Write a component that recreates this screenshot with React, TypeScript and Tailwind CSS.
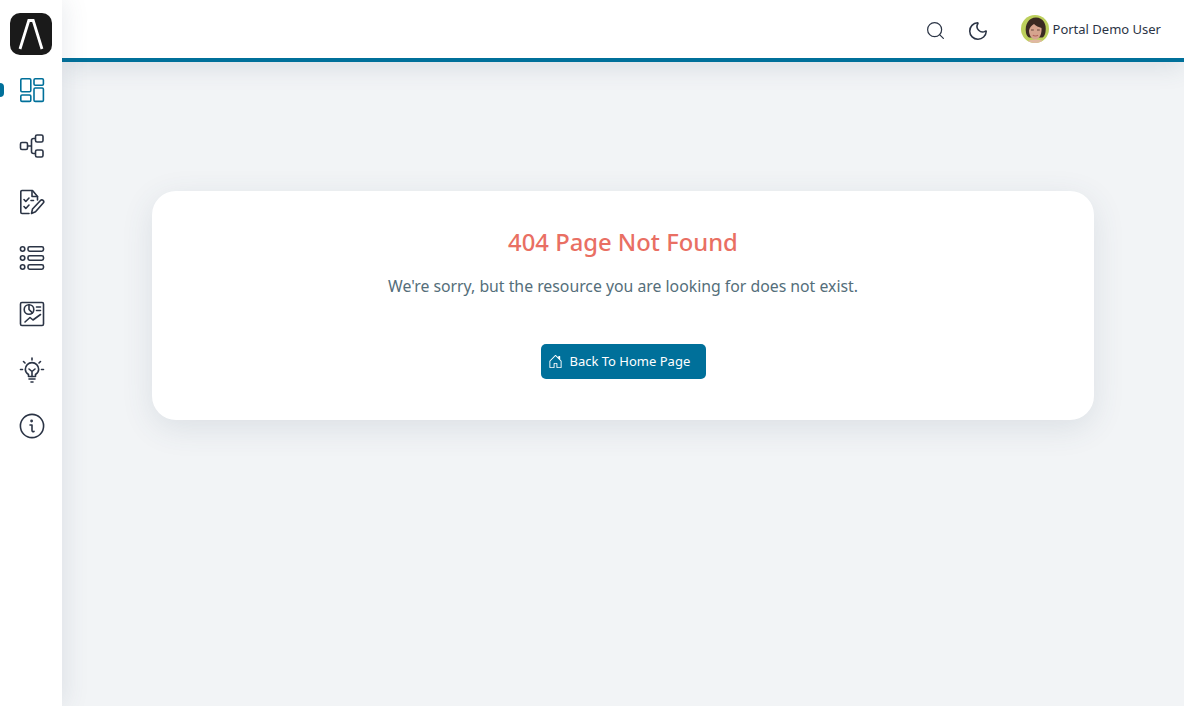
import { Search, Moon } from "lucide-react";
import { BsHouseDoor } from "react-icons/bs";

const ink = "#2b3445";

// sidebar icons, all on a 26 box
function DashIcon() {
  return (
    <svg width="26" height="26" viewBox="0 0 26 26" fill="none" stroke="#00709a" strokeWidth="1.6" strokeLinejoin="round">
      <rect x="1.8" y="1.8" width="10" height="13" rx="1.2" />
      <rect x="15" y="1.8" width="9.4" height="6.4" rx="1.2" />
      <rect x="1.8" y="18" width="10" height="6.4" rx="1.2" />
      <rect x="15" y="11" width="9.4" height="13.4" rx="1.2" />
    </svg>
  );
}

function FlowIcon() {
  return (
    <svg width="26" height="26" viewBox="0 0 26 26" fill="none" stroke={ink} strokeWidth="1.6" strokeLinejoin="round">
      <rect x="1.5" y="9.5" width="7" height="7" rx="1.4" />
      <rect x="16.5" y="2" width="7.5" height="7" rx="1.6" />
      <rect x="16.5" y="17" width="7.5" height="7" rx="1.6" />
      <path d="M8.5 13H12.5M16.5 5.5H14.5a2 2 0 0 0-2 2V18.5a2 2 0 0 0 2 2H16.5" />
    </svg>
  );
}

function FormIcon() {
  return (
    <svg width="26" height="26" viewBox="0 0 26 26" fill="none" stroke={ink} strokeWidth="1.6" strokeLinecap="round" strokeLinejoin="round">
      <path d="M18.5 11V7.5L13.5 1.5H3a1.2 1.2 0 0 0-1.2 1.2V23.3A1.2 1.2 0 0 0 3 24.5H10" />
      <path d="M13 2V7.5H18.5" />
      <path d="M5 10.5L6.8 12.5L10 9M12 11.5H14.5M5 17.5L6.8 19.5L10 16" />
      <path d="M12.5 24.5L13.5 20L21.5 11.5a1.8 1.8 0 0 1 2.7 2.5L16.5 22.8Z" />
    </svg>
  );
}

function ListIcon() {
  return (
    <svg width="26" height="26" viewBox="0 0 26 26" fill="none" stroke={ink} strokeWidth="1.6">
      <circle cx="3.6" cy="4" r="2.2" />
      <circle cx="3.6" cy="13" r="2.2" />
      <circle cx="3.6" cy="22" r="2.2" />
      <rect x="9" y="1.8" width="15.5" height="4.4" rx="1.6" />
      <rect x="9" y="10.8" width="15.5" height="4.4" rx="1.6" />
      <rect x="9" y="19.8" width="15.5" height="4.4" rx="1.6" />
    </svg>
  );
}

function ReportIcon() {
  return (
    <svg width="26" height="26" viewBox="0 0 26 26" fill="none" stroke={ink} strokeWidth="1.6" strokeLinecap="round" strokeLinejoin="round">
      <rect x="1.5" y="1.5" width="23" height="23" rx="1.4" />
      <circle cx="10" cy="8.5" r="4.8" />
      <path d="M10 3.700V8.500L13.400 11.900M17.500 6H21.500M17.500 9.500H21.500" />
      <path d="M6 21L11 16.500L14 19L21.500 13.500" />
    </svg>
  );
}

function BulbIcon() {
  return (
    <svg width="26" height="26" viewBox="0 0 26 26" fill="none" stroke={ink} strokeWidth="1.6" strokeLinecap="round" strokeLinejoin="round">
      <path d="M13 1V3M4.500 4.500L6 6M21.500 4.500L20 6M1.500 12.500H3.500M22.500 12.500H24.500" />
      <path d="M9.500 19.500V17.500C7.500 16.200 6.300 14.400 6.300 12.300A6.700 6.700 0 0 1 19.700 12.300C19.700 14.400 18.500 16.200 16.500 17.500V19.500Z" />
      <path d="M10 12L13 14.500L16 12M13 14.500V19.500M10 22H16M12 25H14" />
    </svg>
  );
}

function InfoIcon() {
  return (
    <svg width="26" height="26" viewBox="0 0 26 26" fill="none" stroke={ink} strokeWidth="1.6" strokeLinecap="round" strokeLinejoin="round">
      <circle cx="13" cy="13" r="11.6" />
      <path d="M11 12H13V17.500C13 18.500 13.800 18.900 15 18.400" />
      <circle cx="12.600" cy="8" r="0.6" fill={ink} />
    </svg>
  );
}

function Avatar() {
  return (
    <svg width="28" height="28" viewBox="0 0 28 28" className="shrink-0">
      <defs>
        <clipPath id="avatar-clip">
          <circle cx="14" cy="14" r="14" />
        </clipPath>
      </defs>
      <g clipPath="url(#avatar-clip)">
        <rect width="28" height="28" fill="#bccf5c" />
        <path d="M5 18C3.500 9 8 2.500 15 2.500C22 2.500 26 9 24.500 17C24 20 23 21.500 21.500 22.500H8C6.500 22 5.500 20 5 18Z" fill="#3a2a22" />
        <path d="M8 15.500C8.500 12.500 10.500 10.500 13 9C14.500 11 18 12 20.500 13C21 18 19 24 14.500 24.500C10.500 24.500 8 20 8 15.500Z" fill="#d6a48e" />
        <path d="M10 15H12.800M16 15H18.800" stroke="#5a3d32" strokeWidth="0.9" />
        <path d="M11.800 20.300C13 21.200 15.800 21.200 17 20.300" stroke="#b4645c" strokeWidth="1.1" fill="none" />
        <path d="M4 28C7 25.500 10 24.500 14.500 24.500C19 24.500 22 25.500 25 28Z" fill="#e0b8a2" />
      </g>
    </svg>
  );
}

function Logo() {
  return (
    <div className="flex h-[42px] w-[42px] items-center justify-center rounded-[10px] bg-[#1a1a1a]">
      <svg width="26" height="32" viewBox="0 0 26 32" fill="none" stroke="#ffffff" strokeWidth="2.8">
        <path d="M2 31L10.800 2.500H15.200L24 31" />
      </svg>
    </div>
  );
}

const navItems = [
  { id: "dashboard", icon: <DashIcon /> },
  { id: "flows", icon: <FlowIcon /> },
  { id: "forms", icon: <FormIcon /> },
  { id: "lists", icon: <ListIcon /> },
  { id: "reports", icon: <ReportIcon /> },
  { id: "ideas", icon: <BulbIcon /> },
  { id: "info", icon: <InfoIcon /> },
];

export default function App() {
  return (
    <div className="flex h-[706px] w-[1184px] overflow-hidden bg-[#f2f4f6] font-['Noto_Sans','Open_Sans',sans-serif]">
      {/* Sidebar */}
      <aside className="relative z-20 flex w-[62px] shrink-0 flex-col items-center bg-white pt-[13px] shadow-[4px_0_24px_rgba(60,80,110,0.10)]">
        <Logo />
        <nav className="mt-[7px] flex w-full flex-col">
          {navItems.map((item, i) => (
            <div key={item.id} className="relative flex h-14 items-center justify-center pl-[2px]">
              {i === 0 && <span className="absolute left-0 top-[21px] h-[14px] w-[4px] rounded-r-[4px] bg-[#00709a]" />}
              {item.icon}
            </div>
          ))}
        </nav>
      </aside>

      <div className="flex min-w-0 flex-1 flex-col">
        {/* Header */}
        <header className="relative z-10 flex h-[62px] shrink-0 items-center justify-end border-b-4 border-[#00709a] bg-white pr-[23px] shadow-[0_6px_24px_rgba(60,80,110,0.12)]">
          <Search size={21} strokeWidth={1.4} color={ink} className="mt-[3px]" />
          <Moon size={22} strokeWidth={1.7} color={ink} className="ml-[21px] mt-[3px]" />
          <div className="ml-[32px] flex items-center gap-[4px]">
            <Avatar />
            <span className="mt-[2px] text-[13px] text-[#2b3445]">Portal Demo User</span>
          </div>
        </header>

        {/* 404 card */}
        <main className="flex-1 px-[90px] pt-[129px]">
          <div className="flex h-[229px] flex-col items-center rounded-[24px] bg-white pt-[33px] shadow-[0_8px_32px_rgba(60,80,110,0.12)]">
            <h1 className="text-[23.8px] font-medium leading-[36px] text-[#e96f63]">404 Page Not Found</h1>
            <p className="mt-[14px] text-[15.8px] leading-[24px] text-[#546e7a]">We're sorry, but the resource you are looking for does not exist.</p>
            <button className="mt-[46px] flex h-[35px] w-[165px] items-center gap-[7px] rounded-[5px] bg-[#00709a] pl-[7px] text-[13px] text-white">
              <BsHouseDoor size={15} />
              <span className="mt-[1px]">Back To Home Page</span>
            </button>
          </div>
        </main>
      </div>
    </div>
  );
}
